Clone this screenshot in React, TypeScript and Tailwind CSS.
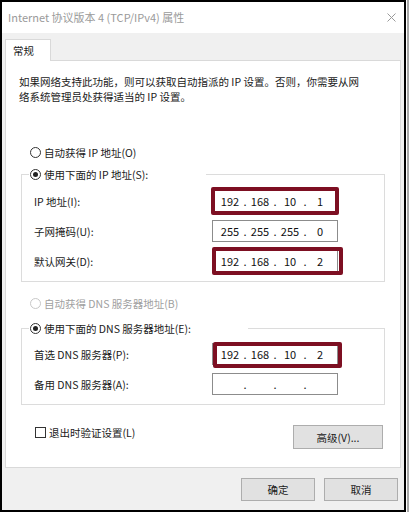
import type { ReactNode } from "react";

const font = "font-['Noto_Sans_CJK_SC','Microsoft_YaHei',sans-serif]";

const Radio = ({ checked, disabled }: { checked?: boolean; disabled?: boolean }) => (
  <span
    className={`w-[11px] h-[11px] rounded-full border bg-white flex items-center justify-center shrink-0 ${
      disabled ? "border-[#c8c8c8]" : "border-[#333]"
    }`}
  >
    {checked && <span className="w-[5px] h-[5px] rounded-full bg-[#222]" />}
  </span>
);

const IpField = ({ octets, mark }: { octets: string[]; mark?: string }) => (
  <div className="relative w-[126px] h-[22px] border border-[#8c8c8c] bg-white flex items-center pl-[6px] text-[11px] text-[#111]">
    {octets.map((o, i) => (
      <div key={i} className="flex">
        <span className="w-[22px] text-center">{o}</span>
        {i < 3 && <span className="w-[8px] text-center">.</span>}
      </div>
    ))}
    {mark && <div className={`absolute border-[4px] border-[#7d0f22] rounded-[2px] ${mark}`} />}
  </div>
);

const Row = ({ label, children }: { label: string; children: ReactNode }) => (
  <div className="flex items-center h-[22px]">
    <span className="w-[178px]">{label}</span>
    {children}
  </div>
);

const Group = ({ legend, legendW, children }: { legend: string; legendW: string; children: ReactNode }) => (
  <fieldset className="ml-[15px] w-[364px] border border-[#dcdcdc]">
    <legend className={`ml-[7px] pl-[1px] ${legendW}`}>
      <span className="flex items-center gap-[3px] h-[15px]">
        <Radio checked />
        {legend}
      </span>
    </legend>
    {children}
  </fieldset>
);

export default function App() {
  return (
    <div className={`w-[415px] h-[514px] bg-white flex ${font} text-[10.5px] leading-[15px] text-[#1a1a1a]`}>
      <div className="w-[406px] h-[512px] border-2 border-black bg-[#f0f0f0] flex flex-col">
        {/* title bar */}
        <div className="h-[31px] bg-white flex items-center justify-between pl-[6px] pr-[7px] shrink-0">
          <span className="text-[11px] text-[#9a9a9a]">Internet 协议版本 4 (TCP/IPv4) 属性</span>
          <svg width="9" height="9" viewBox="0 0 9 9" className="mr-[1px]">
            <path d="M0.5 0.5L8.5 8.5M8.5 0.5L0.5 8.5" stroke="#9a9a9a" strokeWidth="1" />
          </svg>
        </div>

        <div className="flex flex-col px-[3px] pt-[6px]">
          {/* tab */}
          <div className="relative z-10 -mb-px w-[46px] h-[22px] border border-b-0 border-[#d9d9d9] bg-white flex items-center pl-[7px]">
            常规
          </div>

          {/* panel */}
          <div className="h-[408px] border border-[#d9d9d9] bg-white flex flex-col">
            <p className="pl-[13px] pt-[13px] whitespace-nowrap">
              如果网络支持此功能，则可以获取自动指派的 IP 设置。否则，你需要从网
              <br />
              络系统管理员处获得适当的 IP 设置。
            </p>

            <div className="mt-[41px] pl-[24px] flex items-center gap-[3px] h-[15px]">
              <Radio />
              自动获得 IP 地址(O)
            </div>

            <div className="mt-[7px]">
              <Group legend="使用下面的 IP 地址(S):" legendW="w-[177px]">
                <div className="pl-[12px] pt-[8px] pb-[9px] flex flex-col gap-[8px]">
                  <Row label="IP 地址(I):">
                    <IpField octets={["192", "168", "10", "1"]} mark="-top-[4px] -left-[2px] w-[128px] h-[28px]" />
                  </Row>
                  <Row label="子网掩码(U):">
                    <IpField octets={["255", "255", "255", "0"]} />
                  </Row>
                  <Row label="默认网关(D):">
                    <IpField octets={["192", "168", "10", "2"]} mark="-top-[4px] -left-[1px] w-[131px] h-[28px]" />
                  </Row>
                </div>
              </Group>
            </div>

            <div className="mt-[14px] pl-[24px] flex items-center gap-[3px] h-[15px] text-[#a0a0a0]">
              <Radio disabled />
              自动获得 DNS 服务器地址(B)
            </div>

            <div className="mt-[10px]">
              <Group legend="使用下面的 DNS 服务器地址(E):" legendW="w-[219px]">
                <div className="pl-[12px] pt-[7px] pb-[9px] flex flex-col gap-[8px]">
                  <Row label="首选 DNS 服务器(P):">
                    <IpField octets={["192", "168", "10", "2"]} mark="-top-[2px] left-0 w-[129px] h-[26px]" />
                  </Row>
                  <Row label="备用 DNS 服务器(A):">
                    <IpField octets={["", "", "", ""]} />
                  </Row>
                </div>
              </Group>
            </div>

            <div className="mt-[20px] pl-[29px] pr-[17px] flex items-start justify-between">
              <div className="flex items-center gap-[3px] h-[15px] mt-[0px]">
                <span className="w-[11px] h-[11px] border border-[#333] bg-white" />
                退出时验证设置(L)
              </div>
              <button className="w-[90px] h-[24px] border border-[#adadad] bg-[#e1e1e1]">高级(V)...</button>
            </div>
          </div>

          {/* dialog buttons */}
          <div className="mt-[10px] pr-[3px] flex justify-end gap-[9px]">
            <button className="w-[74px] h-[23px] border border-[#adadad] bg-[#e1e1e1]">确定</button>
            <button className="w-[74px] h-[23px] border border-[#adadad] bg-[#e1e1e1]">取消</button>
          </div>
        </div>
      </div>
      <div className="ml-[1px] w-[2px] h-[512px] bg-[#a8a8a8]" />
    </div>
  );
}
